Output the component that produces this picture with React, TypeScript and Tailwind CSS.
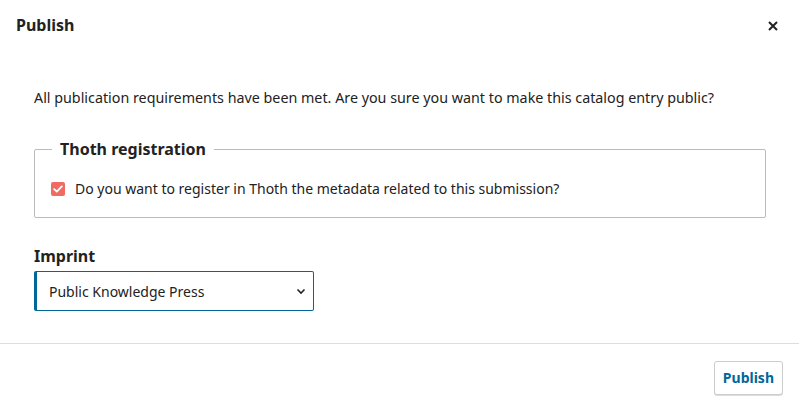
import React, { useState } from 'react';

const App = () => {
  const [checked, setChecked] = useState(true);

  return (
    <div className="w-[799px] h-[411px] bg-white text-[#222] flex flex-col" style={{ fontFamily: '"Noto Sans", sans-serif' }}>
      {/* Header */}
      <div className="flex items-center justify-between pl-4 pr-4 h-[50px]">
        <h2 className="text-[16px] font-bold leading-none">Publish</h2>
        <button className="w-5 h-5 flex items-center justify-center text-[#222] mt-[2px]">
          <svg width="10" height="10" viewBox="0 0 10 10" fill="none">
            <path d="M1 1L9 9M9 1L1 9" stroke="currentColor" strokeWidth="2" />
          </svg>
        </button>
      </div>

      {/* Body */}
      <div className="flex-1 px-[34px] pt-[38px]">
        <p className="text-[14.3px] leading-5">
          All publication requirements have been met. Are you sure you want to make this catalog entry public?
        </p>

        <fieldset className="mt-[29px] w-[732px] h-[81px] border border-[#bbb] rounded-[2px] px-4 pb-0">
          <legend className="px-2 ml-[1px] text-[16px] font-bold leading-6">Thoth registration</legend>
          <label className="flex items-center gap-[10px] mt-[17px] text-[14px]">
            <span
              onClick={() => setChecked(!checked)}
              className="w-[14px] h-[14px] rounded-[2px] bg-[#f06c62] flex items-center justify-center"
            >
              {checked && (
                <svg width="10" height="8" viewBox="0 0 10 8" fill="none">
                  <path d="M1.2 4.2L3.8 6.6L8.8 1.4" stroke="white" strokeWidth="1.8" strokeLinecap="round" strokeLinejoin="round" />
                </svg>
              )}
            </span>
            <span>Do you want to register in Thoth the metadata related to this submission?</span>
          </label>
        </fieldset>

        <div className="mt-[26px]">
          <div className="text-[16px] font-bold leading-6">Imprint</div>
          <div className="mt-[3px] w-[280px] h-[40px] border border-[#006798] border-l-[3px] rounded-[2px] flex items-center justify-between pl-[12px] pr-[6px] text-[14px]">
            <span>Public Knowledge Press</span>
            <svg width="12" height="12" viewBox="0 0 12 12" fill="none">
              <path d="M2.5 4.5L6 8L9.5 4.5" stroke="#222" strokeWidth="1.6" />
            </svg>
          </div>
        </div>
      </div>

      {/* Footer */}
      <div className="border-t border-[#ddd] h-[68px] flex items-center justify-end pr-[16px]">
        <button className="h-[34px] px-[8px] border border-[#ccc] rounded-[3px] shadow-[0_1px_0_#ddd] text-[14px] font-bold text-[#006798] bg-white">
          Publish
        </button>
      </div>
    </div>
  );
};

export default App;
